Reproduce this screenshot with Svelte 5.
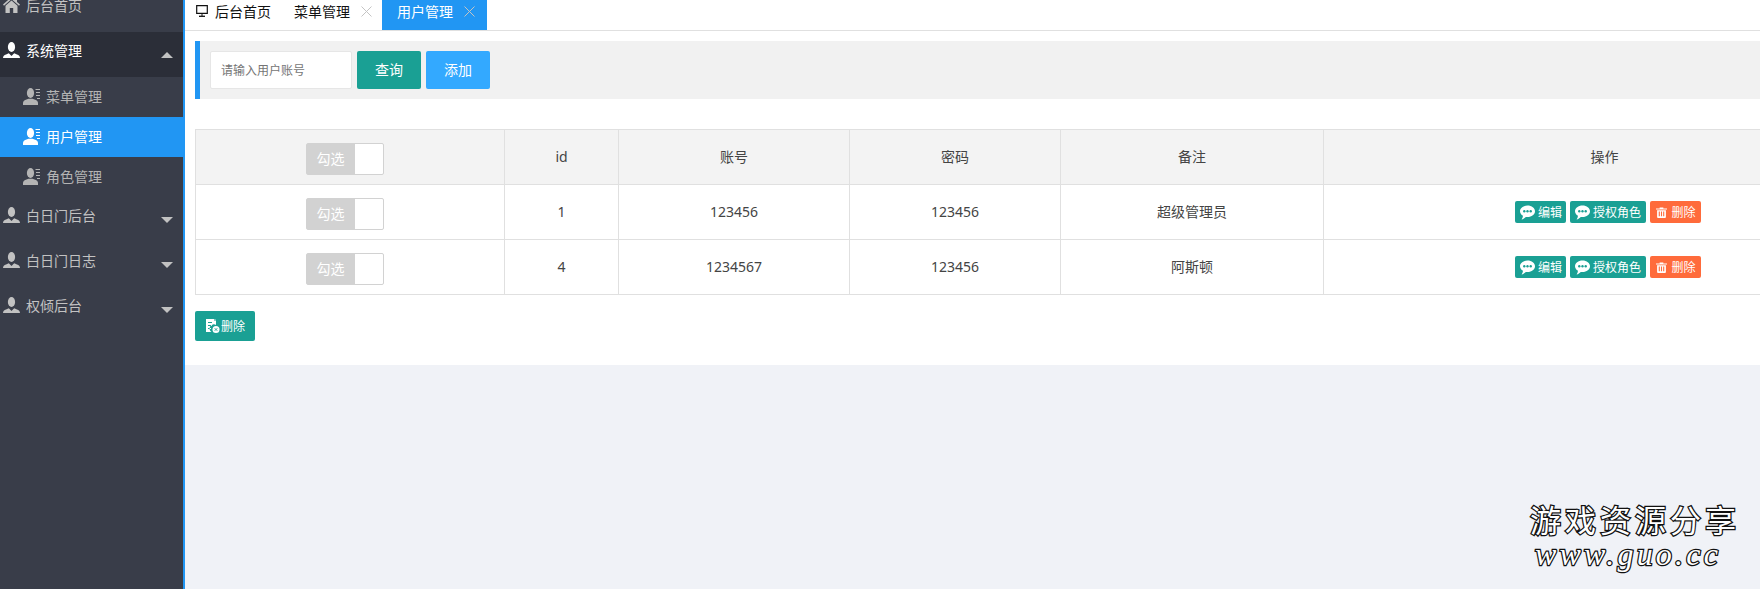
<script>
    const rows = [
        { id: 1, account: "123456", password: "123456", note: "超级管理员" },
        { id: 4, account: "1234567", password: "123456", note: "阿斯顿" }
    ];
    const subMenu = ["菜单管理", "用户管理", "角色管理"];
    const closedMenu = ["白日门后台", "白日门日志", "权倾后台"];
</script>

{#snippet userIcon()}
    <svg class="icon-user" viewBox="0 0 17 16">
        <ellipse cx="8.5" cy="5" rx="3.600" ry="5" fill="currentColor" />
        <path d="M0 16c0-2.300 1.200-3 3-3.600l2.800-1.200 2.700 2.800 2.700-2.800 2.800 1.200c1.800.6 3 1.300 3 3.600z" fill="currentColor" />
    </svg>
{/snippet}

{#snippet subIcon()}
    <svg class="icon-sub" viewBox="0 0 17 17">
        <ellipse cx="7.500" cy="5" rx="3.600" ry="5" fill="currentColor" />
        <path d="M0 17v-2c0-2 1.500-3 3.500-3.500l2-.8h4l2 .8c2 .5 3.500 1.500 3.500 3.500v2z" fill="currentColor" />
        <path d="M12.500 1.500H17M13 4.500h4M13 7.500h4M14 10.500h3" stroke="currentColor" stroke-width="1" fill="none" />
    </svg>
{/snippet}

{#snippet chatIcon()}
    <svg class="icon-chat" viewBox="0 0 14 14">
        <path d="M7 .5C3.100.5 0 2.800 0 5.800c0 1.700 1.100 3.300 2.800 4.200-.1 1.200-.6 2.300-1.300 3.500 1.500-.4 2.900-1.300 3.900-2.400.5.100 1 .1 1.600.1 3.900 0 7-2.400 7-5.400S10.900.5 7 .5z" fill="#fff" />
        <circle cx="4" cy="5.800" r="1.100" fill="#1aa094" />
        <circle cx="7" cy="5.800" r="1.100" fill="#1aa094" />
        <circle cx="10" cy="5.800" r="1.100" fill="#1aa094" />
    </svg>
{/snippet}

{#snippet trashIcon()}
    <svg class="icon-trash" viewBox="0 0 12 12">
        <path d="M4 1.500V.5h4v1h4v1.200H0V1.500z" fill="#fff" />
        <path d="M1.200 3.500h9.600V11a1 1 0 0 1-1 1H2.200a1 1 0 0 1-1-1zM3 5v5h1.200V5zm2.400 0v5h1.200V5zM7.800 5v5H9V5z" fill="#fff" fill-rule="evenodd" />
    </svg>
{/snippet}

<div class="page">
    <aside class="sidebar">
        <ul class="menu">
            <li class="menu-item">
                <svg class="icon-home" viewBox="0 0 17 16">
                    <path d="M8.500 0L0 7.500l1 1.200 7.500-6.500 7.500 6.500 1-1.200-3-2.600V1h-2v2.200z" fill="currentColor" />
                    <path d="M8.500 3.500L2.500 8.700V16h4.300v-5h3.400v5h4.300V8.700z" fill="currentColor" />
                </svg>
                <span>后台首页</span>
            </li>
            <li class="menu-item open">
                {@render userIcon()}
                <span>系统管理</span>
                <i class="arrow up"></i>
            </li>
            {#each subMenu as name}
                <li class="sub-item" class:selected={name === "用户管理"}>
                    {@render subIcon()}
                    <span>{name}</span>
                </li>
            {/each}
            {#each closedMenu as name}
                <li class="menu-item">
                    {@render userIcon()}
                    <span>{name}</span>
                    <i class="arrow down"></i>
                </li>
            {/each}
        </ul>
    </aside>

    <main class="main">
        <nav class="tabs">
            <div class="tab home">
                <svg class="icon-monitor" viewBox="0 0 12 12">
                    <path d="M.7.7h10.600v7.600H.7z" fill="none" stroke="#111" stroke-width="1.200" />
                    <path d="M3 11.300h6" stroke="#111" stroke-width="1.300" />
                    <path d="M6 9v2" stroke="#111" stroke-width="1" />
                </svg>
                <span>后台首页</span>
            </div>
            <div class="tab">
                <span>菜单管理</span>
                <svg class="icon-close" viewBox="0 0 11 11"><path d="M.5.500l10 10M10.500.500l-10 10" /></svg>
            </div>
            <div class="tab active">
                <span>用户管理</span>
                <svg class="icon-close" viewBox="0 0 11 11"><path d="M.5.500l10 10M10.500.500l-10 10" /></svg>
            </div>
        </nav>

        <section class="content">
            <div class="search-bar">
                <input class="search-input" placeholder="请输入用户账号" />
                <button class="btn btn-query">查询</button>
                <button class="btn btn-add">添加</button>
            </div>

            <table class="grid">
                <colgroup>
                    <col style="width:309px" />
                    <col style="width:114px" />
                    <col style="width:231px" />
                    <col style="width:211px" />
                    <col style="width:263px" />
                    <col style="width:562px" />
                </colgroup>
                <thead>
                    <tr>
                        <th>
                            <div class="switch"><span class="switch-label">勾选</span><span class="switch-off"></span></div>
                        </th>
                        <th>id</th>
                        <th>账号</th>
                        <th>密码</th>
                        <th>备注</th>
                        <th>操作</th>
                    </tr>
                </thead>
                <tbody>
                    {#each rows as row}
                        <tr>
                            <td>
                                <div class="switch"><span class="switch-label">勾选</span><span class="switch-off"></span></div>
                            </td>
                            <td>{row.id}</td>
                            <td>{row.account}</td>
                            <td>{row.password}</td>
                            <td>{row.note}</td>
                            <td>
                                <div class="actions">
                                    <button class="btn-xs">{@render chatIcon()}<span>编辑</span></button>
                                    <button class="btn-xs">{@render chatIcon()}<span>授权角色</span></button>
                                    <button class="btn-xs danger">{@render trashIcon()}<span>删除</span></button>
                                </div>
                            </td>
                        </tr>
                    {/each}
                </tbody>
            </table>

            <button class="btn-delete">
                <svg class="icon-doc" viewBox="0 0 14 14">
                    <path d="M0 0h8v1.500h2V6a4 4 0 0 0-4.500 7H0zM2 3v1h4V3zM2 6v1h4V6zM2 9v1h3V9z" fill="#fff" fill-rule="evenodd" />
                    <path d="M8.500 1l1.500 0-1.500-1z" fill="#fff" />
                    <circle cx="10" cy="10.500" r="3.500" fill="#fff" />
                    <path d="M8.700 9.200l2.600 2.600M11.300 9.200l-2.600 2.600" stroke="#1aa094" stroke-width=".9" />
                </svg>
                <span>删除</span>
            </button>
        </section>
    </main>

    <div class="watermark">
        <div class="mark-cn">游戏资源分享</div>
        <div class="mark-en">www.guo.cc</div>
    </div>
</div>

<style>
    :global(body) {
        background: #f0f2f7;
        overflow: hidden;
    }

    .page {
        position: relative;
        display: flex;
        height: 589px;
        overflow: hidden;
        font-family: "Noto Sans", "Noto Sans CJK SC", sans-serif;
        font-size: 14px;
    }

    .sidebar {
        flex: 0 0 183px;
        background: #393d49;
        border-right: 2px solid #2196f3;
        overflow: hidden;
    }

    .menu {
        list-style: none;
        margin: -13px 0 0;
        padding: 0;
    }

    .menu-item {
        display: flex;
        align-items: center;
        box-sizing: border-box;
        height: 45px;
        padding: 0 10px 9px 3px;
        color: #c2c2c2;
    }

    .menu-item span {
        margin-left: 6px;
    }

    .menu-item.open {
        background: #2b2e38;
        color: #fff;
    }

    .arrow {
        width: 0;
        height: 0;
        margin-left: auto;
        margin-top: 9px;
        border-left: 6px solid transparent;
        border-right: 6px solid transparent;
    }

    .arrow.up {
        border-bottom: 6px solid #c2c2c2;
    }

    .arrow.down {
        border-top: 6px solid #c2c2c2;
    }

    .sub-item {
        display: flex;
        align-items: center;
        box-sizing: border-box;
        height: 40px;
        padding: 0 0 2px 23px;
        color: #b4b4b4;
    }

    .sub-item span {
        margin-left: 6px;
    }

    .sub-item.selected {
        background: #2196f3;
        color: #fff;
    }

    .icon-user {
        width: 17px;
        height: 16px;
        flex: none;
    }

    .icon-sub {
        width: 17px;
        height: 17px;
        flex: none;
    }

    .icon-home {
        width: 17px;
        height: 16px;
        flex: none;
    }

    .main {
        flex: 1;
        min-width: 0;
        overflow: hidden;
    }

    .tabs {
        display: flex;
        height: 30px;
        background: #fff;
        border-bottom: 1px solid #e0e0e0;
        color: #111;
    }

    .tab {
        display: flex;
        align-items: center;
        padding: 0 10px 8px 15px;
    }

    .tab.home {
        padding: 0 8px 8px 11px;
    }

    .tab.active {
        background: #2196f3;
        color: #fff;
        padding-right: 12px;
    }

    .icon-monitor {
        width: 12px;
        height: 12px;
        margin-right: 7px;
    }

    .icon-close {
        width: 11px;
        height: 11px;
        margin-left: 11px;
        fill: none;
        stroke: #c4c4c4;
        stroke-width: 1;
    }

    .content {
        box-sizing: border-box;
        height: 334px;
        padding: 10px 0 0 10px;
        background: #fff;
    }

    .search-bar {
        display: flex;
        align-items: center;
        gap: 5px;
        height: 58px;
        padding-left: 10px;
        background: #f1f1f1;
        border-left: 5px solid #2196f3;
    }

    .search-input {
        box-sizing: border-box;
        width: 142px;
        height: 38px;
        padding: 0 10px;
        border: 1px solid #e6e6e6;
        border-radius: 2px;
        background: #fff;
        font: inherit;
        font-size: 12px;
    }

    .search-input::placeholder {
        color: #757575;
    }

    .btn {
        width: 64px;
        height: 38px;
        padding: 0 0 2px;
        border: 0;
        border-radius: 2px;
        color: #fff;
        font: inherit;
    }

    .btn-query {
        background: #1aa094;
    }

    .btn-add {
        background: #33a9ff;
    }

    .grid {
        width: 1690px;
        margin-top: 30px;
        border-collapse: collapse;
        table-layout: fixed;
        color: #444;
        font-size: 14px;
    }

    .grid th,
    .grid td {
        height: 55px;
        box-sizing: border-box;
        padding: 0 0 2px;
        border: 1px solid #e0e0e0;
        font-weight: 400;
        text-align: center;
    }

    .grid th {
        background: #f3f3f3;
    }

    .switch {
        display: inline-flex;
        box-sizing: border-box;
        width: 78px;
        height: 32px;
        margin: 5px 11px 0 0;
        vertical-align: middle;
        border: 1px solid #d2d2d2;
        border-radius: 2px;
        background: #fff;
    }

    .switch-label {
        flex: 0 0 48px;
        background: #d2d2d2;
        color: #fff;
        line-height: 30px;
        text-align: center;
    }

    .actions {
        display: flex;
        justify-content: center;
        gap: 4px;
        margin-top: 2px;
        padding-left: 7px;
    }

    .btn-xs {
        display: flex;
        align-items: center;
        gap: 3px;
        height: 22px;
        padding: 0 4.500px;
        border: 0;
        border-radius: 2px;
        background: #1aa094;
        color: #fff;
        font: inherit;
        font-size: 12px;
    }

    .btn-xs.danger {
        gap: 5px;
        padding: 0 5px 0 6px;
        background: #ff6b3b;
    }

    .icon-chat {
        width: 15px;
        height: 15px;
    }

    .icon-trash {
        width: 11px;
        height: 11px;
    }

    .btn-delete {
        display: flex;
        align-items: center;
        gap: 1px;
        width: 60px;
        height: 30px;
        margin-top: 16px;
        padding: 0 0 0 11px;
        border: 0;
        border-radius: 2px;
        background: #1aa094;
        color: #fff;
        font: inherit;
        font-size: 12px;
    }

    .icon-doc {
        width: 14px;
        height: 14px;
    }

    .watermark {
        position: absolute;
        left: 1530px;
        top: 500px;
        color: #fff;
        -webkit-text-stroke: 2.500px #111;
        paint-order: stroke fill;
        white-space: nowrap;
    }

    .mark-cn {
        font-size: 31px;
        line-height: 40px;
        letter-spacing: 4px;
    }

    .mark-en {
        margin-left: 5px;
        font-family: "Liberation Serif", serif;
        font-size: 32px;
        font-style: italic;
        line-height: 28px;
        letter-spacing: 3.200px;
    }
</style>
